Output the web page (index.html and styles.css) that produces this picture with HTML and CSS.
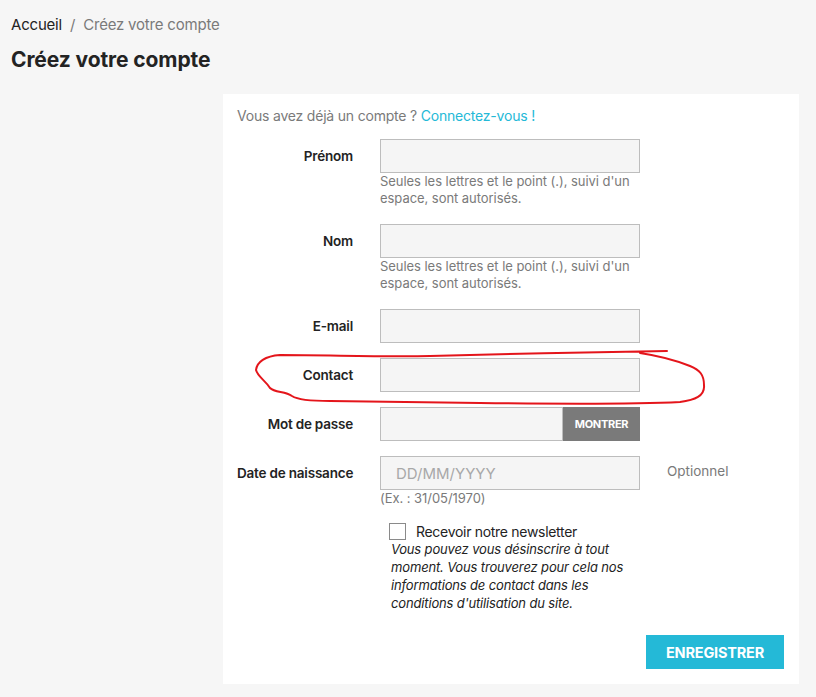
FILE: index.html
```html
<!DOCTYPE html>
<html lang="fr">
<head>
<meta charset="utf-8">
<title>Créez votre compte</title>
<link rel="stylesheet" href="styles.css">
</head>
<body>
<nav class="breadcrumb"><span class="crumb">Accueil</span><span class="sep">/</span><span class="current">Créez votre compte</span></nav>
<h1 class="title">Créez votre compte</h1>
<section class="card">
  <p class="login">Vous avez déjà un compte ? <a class="link" href="#">Connectez-vous !</a></p>
  <form class="form">
    <div class="row row-help">
      <label class="label">Prénom</label>
      <div class="field"><input class="input" type="text"><div class="help">Seules les lettres et le point (.), suivi d'un espace, sont autorisés.</div></div>
    </div>
    <div class="row row-help">
      <label class="label">Nom</label>
      <div class="field"><input class="input" type="text"><div class="help">Seules les lettres et le point (.), suivi d'un espace, sont autorisés.</div></div>
    </div>
    <div class="row">
      <label class="label">E-mail</label>
      <div class="field"><input class="input" type="text"></div>
    </div>
    <div class="row">
      <label class="label">Contact</label>
      <div class="field"><input class="input" type="text"></div>
    </div>
    <div class="row">
      <label class="label">Mot de passe</label>
      <div class="field"><div class="pwd"><input class="input pwd-input" type="password"><button type="button" class="show">MONTRER</button></div></div>
    </div>
    <div class="row">
      <label class="label">Date de naissance</label>
      <div class="field"><input class="input" type="text" placeholder="DD/MM/YYYY"><div class="help">(Ex. : 31/05/1970)</div></div>
      <span class="optional">Optionnel</span>
    </div>
    <div class="news">
      <div class="check-line"><span class="checkbox"></span><span class="check-label">Recevoir notre newsletter</span></div>
      <p class="news-note">Vous pouvez vous désinscrire à tout moment. Vous trouverez pour cela nos informations de contact dans les conditions d'utilisation du site.</p>
    </div>
    <div class="actions"><button type="button" class="submit">ENREGISTRER</button></div>
  </form>
</section>
<svg class="annot" width="816" height="697" viewBox="0 0 816 697"><path d="M667,351 C600,352 500,354 430,356 C380,357 330,355 280,355 C265,356 257,362 256,370 C258,377 265,380 270,388 C275,393 285,391 292,396 C298,400 310,401 330,401 L480,403 C560,404 640,404 680,402 C695,400 705,396 704,385 C704,375 700,370 690,366 C675,360 660,356 640,353" fill="none" stroke="#e4151b" stroke-width="2" stroke-linecap="round"/></svg>
</body>
</html>
```
FILE: styles.css
```css
* { box-sizing: border-box; }
html, body { margin: 0; }
body {
  background: #f6f6f6;
  font-family: "Inter", "Noto Sans", sans-serif;
  color: #232323;
  position: relative;
  min-height: 697px;
}
.breadcrumb {
  padding: 15px 0 0 11px;
  font-size: 15px;
  line-height: 20px;
  letter-spacing: -0.2px;
}
.crumb { color: #232323; }
.sep { color: #7a7a7a; margin: 0 8px 0 8px; }
.current { color: #7a7a7a; }
.title {
  margin: 13px 0 0 11px;
  font-size: 21px;
  line-height: 24px;
  font-weight: 700;
  letter-spacing: -0.1px;
}
.card {
  background: #fff;
  margin: 22px 0 0 223px;
  width: 576px;
  padding: 12px 15px 15px 14px;
}
.login {
  margin: 0;
  font-size: 14px;
  line-height: 20px;
  color: #7a7a7a;
  letter-spacing: -0.2px;
}
.link { color: #24b9d7; text-decoration: none; }
.form { margin-top: 13px; }
.row {
  display: grid;
  grid-template-columns: 116px 260px auto;
  column-gap: 27px;
  align-items: start;
  margin-bottom: 15px;
}
.row-help { margin-bottom: 16px; }
.label {
  text-align: right;
  font-size: 13.5px;
  font-weight: 600;
  line-height: 34px;
  color: #232323;
  letter-spacing: -0.2px;
  white-space: nowrap;
}
.input {
  display: block;
  width: 260px;
  height: 34px;
  border: 1px solid #bdbdbd;
  background: #f5f5f5;
  margin: 0;
  padding: 0 15px;
  font-family: inherit;
  font-size: 15px;
  color: #232323;
  outline: none;
}
.input::placeholder { color: #a8a8a8; }
.help {
  font-size: 13px;
  line-height: 17px;
  color: #7a7a7a;
  margin-top: 0;
  letter-spacing: -0.05px;
}
.row-help .help { margin-bottom: 1px; }
.pwd { display: flex; width: 260px; height: 34px; }
.pwd-input { width: 183px; flex: none; }
.show {
  flex: 1;
  border: none;
  margin: 0;
  background: #7a7a7a;
  color: #fff;
  font-family: inherit;
  font-size: 11px;
  font-weight: 700;
  letter-spacing: -0.3px;
  padding: 0;
}
.optional {
  font-size: 13.5px;
  line-height: 30px;
  color: #7a7a7a;
  margin-left: 0;
}
.news { margin: 16px 0 0 152px; }
.check-line { display: flex; align-items: center; }
.checkbox {
  width: 17px;
  height: 17px;
  border: 1px solid #8a8a8a;
  background: #fff;
  display: inline-block;
  margin-left: 0;
  margin-right: 10px;
}
.check-label {
  font-size: 14px;
  line-height: 17px;
  color: #232323;
  letter-spacing: -0.3px;
}
.news-note {
  margin: 0 0 0 2px;
  width: 240px;
  font-size: 13px;
  line-height: 18px;
  font-style: italic;
  color: #232323;
  letter-spacing: -0.15px;
}
.actions { display: flex; justify-content: flex-end; margin-top: 23px; }
.submit {
  width: 138px;
  height: 34px;
  border: none;
  background: #24b9d7;
  color: #fff;
  font-family: inherit;
  font-size: 14.5px;
  font-weight: 700;
  padding: 0;
  letter-spacing: -0.2px;
}
.annot { position: absolute; left: 0; top: 0; pointer-events: none; }
```
